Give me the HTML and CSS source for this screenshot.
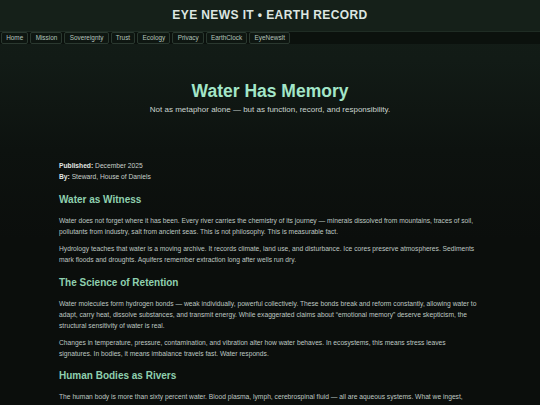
FILE: index.html
```html
<!DOCTYPE html>
<html lang="en">
<head>
<meta charset="utf-8">
<title>Water Has Memory</title>
<link rel="stylesheet" href="styles.css">
</head>
<body>
<header class="site-header">
  <div class="brand">EYE NEWS IT • EARTH RECORD</div>
  <nav class="nav">
    <a class="nav-btn" href="#">Home</a>
    <a class="nav-btn" href="#">Mission</a>
    <a class="nav-btn" href="#">Sovereignty</a>
    <a class="nav-btn" href="#">Trust</a>
    <a class="nav-btn" href="#">Ecology</a>
    <a class="nav-btn" href="#">Privacy</a>
    <a class="nav-btn" href="#">EarthClock</a>
    <a class="nav-btn" href="#">EyeNewsIt</a>
  </nav>
</header>
<main class="page">
  <section class="hero">
    <h1 class="title">Water Has Memory</h1>
    <p class="subtitle">Not as metaphor alone — but as function, record, and responsibility.</p>
  </section>
  <article class="article">
    <div class="meta">
      <div><strong>Published:</strong> December 2025</div>
      <div><strong>By:</strong> Steward, House of Daniels</div>
    </div>
    <h2 class="section-title">Water as Witness</h2>
    <p class="para">Water does not forget where it has been. Every river carries the chemistry of its journey — minerals dissolved from mountains, traces of soil, pollutants from industry, salt from ancient seas. This is not philosophy. This is measurable fact.</p>
    <p class="para">Hydrology teaches that water is a moving archive. It records climate, land use, and disturbance. Ice cores preserve atmospheres. Sediments mark floods and droughts. Aquifers remember extraction long after wells run dry.</p>
    <h2 class="section-title">The Science of Retention</h2>
    <p class="para">Water molecules form hydrogen bonds — weak individually, powerful collectively. These bonds break and reform constantly, allowing water to adapt, carry heat, dissolve substances, and transmit energy. While exaggerated claims about “emotional memory” deserve skepticism, the structural sensitivity of water is real.</p>
    <p class="para">Changes in temperature, pressure, contamination, and vibration alter how water behaves. In ecosystems, this means stress leaves signatures. In bodies, it means imbalance travels fast. Water responds.</p>
    <h2 class="section-title section-title-tight">Human Bodies as Rivers</h2>
    <p class="para">The human body is more than sixty percent water. Blood plasma, lymph, cerebrospinal fluid — all are aqueous systems. What we ingest, breathe, and absorb moves through us as water first.</p>
  </article>
</main>
</body>
</html>
```
FILE: styles.css
```css
* { box-sizing: border-box; }
html, body { margin: 0; padding: 0; }
body {
  font-family: "Liberation Sans", Arial, sans-serif;
  color: #c3cbc6;
  background: linear-gradient(180deg, #131d17 0px, #121b16 60px, #0d120f 150px, #0b0e0c 240px, #0b0e0c 100%);
  min-height: 405px;
  overflow: hidden;
}
.site-header {
  background: #152019;
}
.brand {
  height: 31px;
  line-height: 31px;
  text-align: center;
  font-weight: bold;
  font-size: 12px;
  letter-spacing: 0.4px;
  color: #dde6e1;
}
.nav {
  display: flex;
  gap: 2px;
  height: 13px;
  padding: 0 1px;
  background: #0b110d;
  border-top: 1px solid #1f2c24;
}
.nav-btn {
  display: block;
  height: 12px;
  line-height: 10px;
  padding: 0 4.2px;
  font-size: 6.4px;
  color: #b5c4bc;
  text-decoration: none;
  background: #0e1611;
  border: 1px solid #2a382f;
  border-radius: 2px;
}
.page {
  width: 422px;
  margin: 0 auto;
}
.hero {
  padding-top: 36.5px;
  text-align: center;
}
.title {
  margin: 0;
  font-size: 17.5px;
  line-height: 21px;
  font-weight: bold;
  color: #a3e6c8;
}
.subtitle {
  margin: 3.5px 0 0;
  font-size: 8px;
  line-height: 10px;
  color: #cad5cf;
}
.article {
  padding-top: 44.5px;
  padding-right: 2.5px;
}
.meta {
  font-size: 6.7px;
  line-height: 11px;
  color: #c8d0cb;
}
.meta strong { color: #e2e8e4; }
.section-title {
  margin: 12.5px 0 8.5px;
  font-size: 10px;
  line-height: 12px;
  font-weight: bold;
  color: #8fd0af;
}
.section-title-tight { margin-top: 11.5px; }
.para {
  margin: 0 0 6px;
  font-size: 6.7px;
  line-height: 11px;
  color: #bfc7c2;
}
```
